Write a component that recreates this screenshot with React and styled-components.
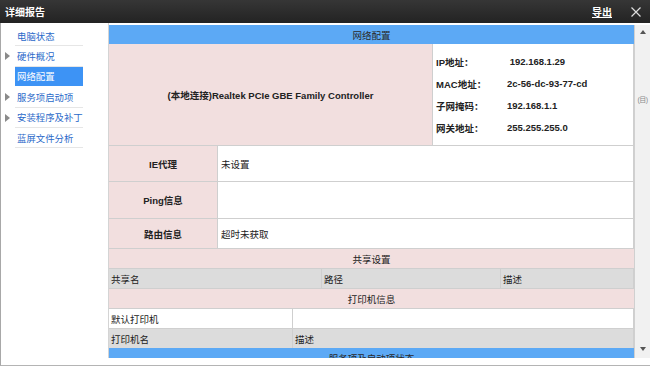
import React from 'react';
import styled, { createGlobalStyle } from 'styled-components';

const Global = createGlobalStyle`
  html, body { margin: 0; padding: 0; background: #fff; }
  body {
    font-family: "Liberation Sans", "Noto Sans CJK SC", "Noto Sans", sans-serif;
    font-size: 9.5px; color: #222;
  }
  * { box-sizing: border-box; }
`;

const Window = styled.div`
  width: 650px; height: 367px; overflow: hidden; background: #fff;
  display: flex; flex-direction: column;
`;
const TitleBar = styled.div`
  height: 23px; flex: none; display: flex; align-items: center;
  padding-left: 5px; color: #fff;
  background: linear-gradient(#363636, #232323);
`;
const Title = styled.div` flex: 1; font-weight: bold; font-size: 10px; `;
const ExportLink = styled.span`
  font-size: 10px; font-weight: bold; text-decoration: underline; margin-right: 19px;
`;
const CloseIcon = styled.svg` width: 10px; height: 10px; margin-right: 9px; `;

const Body = styled.div`
  height: 343px; display: flex; border-left: 1px solid #a8a8a8;
  border-bottom: 1px solid #b4b4b4;
`;
const Sidebar = styled.ul`
  list-style: none; margin: 0; padding: 3px 0 0 0; width: 107px; flex: none;
`;
const NavItem = styled.li`
  position: relative; margin-left: 14px; width: 68px; height: 20.4px;
  display: flex; align-items: center; padding-left: 2px; white-space: nowrap;
  border-bottom: 1px solid ${p => (p.$active ? '#fff' : '#e6e6e6')};
  color: ${p => (p.$active ? '#fff' : '#2a69c9')};
  background: ${p => (p.$active ? '#3d93f5' : 'transparent')};
  font-size: 9.4px;
  &::before {
    content: ''; display: ${p => (p.$arrow ? 'block' : 'none')};
    position: absolute; left: -10px; top: 6px;
    border-left: 5px solid #8a8a8a; border-top: 4px solid transparent; border-bottom: 4px solid transparent;
  }
`;

const Main = styled.div`
  flex: 1; display: flex; padding-top: 2px; border-left: 1px solid #d4d4d4;
  height: 335px;
`;
const ScrollArea = styled.div` width: 525px; height: 333px; overflow: hidden; `;
const Scrollbar = styled.div`
  flex: 1; height: 333px; background: #f1f1f1; border-left: 1px solid #d0d0d0;
  display: flex; flex-direction: column; align-items: center;
  padding: 3px 0;
`;
const ArrowUp = styled.div`
  border-bottom: 4px solid #555; border-left: 3px solid transparent; border-right: 3px solid transparent;
  margin-top: 2px;
`;
const ArrowDown = styled.div`
  border-top: 4px solid #555; border-left: 3px solid transparent; border-right: 3px solid transparent;
  margin-top: auto; margin-bottom: 4px;
`;
const Thumb = styled.div`
  width: 13px; height: 40px; margin-top: 45px;
  display: flex; align-items: center; justify-content: center;
  color: #8a8a8a; font-size: 7px; letter-spacing: -0.5px;
`;

const SectionHeader = styled.div`
  height: 19px; background: #5ca9f5; display: flex; align-items: center; justify-content: center;
  color: #2a2a2a;
`;
const NetRow = styled.div`
  display: grid; grid-template-columns: 323px 1fr; height: 101px;
`;
const PinkCell = styled.div`
  background: #f2dfdf; display: flex; align-items: center; justify-content: center;
  font-weight: bold; color: #222;
`;
const InfoCell = styled.div`
  background: #fff; border-left: 1px solid #cfcfcf; border-right: 1px solid #cfcfcf;
  display: flex; flex-direction: column; justify-content: center; padding-left: 3px;
`;
const InfoLine = styled.div`
  display: grid; grid-template-columns: 71px 1fr; height: 22px; align-items: center;
  font-weight: bold; white-space: pre;
`;
const KVRow = styled.div`
  display: grid; grid-template-columns: 108px 1fr; height: ${p => p.$h}px;
  border-top: 1px solid #cfcfcf;
`;
const ValueCell = styled.div`
  background: #fff; border-left: 1px solid #cfcfcf; border-right: 1px solid #cfcfcf;
  display: flex; align-items: center; padding-left: 3px;
`;
const SubHeader = styled.div`
  height: 20px; background: #f2dfdf; border-top: 1px solid #cfcfcf;
  display: flex; align-items: center; justify-content: center;
`;
const GridRow = styled.div`
  display: grid; grid-template-columns: ${p => p.$cols}; height: 20px;
  background: ${p => (p.$white ? '#fff' : '#dcdcdc')};
  border-top: 1px solid #cfcfcf; border-right: 1px solid #cfcfcf;
`;
const GridCell = styled.div`
  display: flex; align-items: center; padding-left: 2px;
  & + & { border-left: 1px solid #cfcfcf; }
`;

const nav = [
  { t: '电脑状态' },
  { t: '硬件概况', arrow: true },
  { t: '网络配置', active: true },
  { t: '服务项启动项', arrow: true },
  { t: '安装程序及补丁', arrow: true },
  { t: '蓝屏文件分析' },
];

const info = [
  ['IP地址：', ' 192.168.1.29'],
  ['MAC地址：', '2c-56-dc-93-77-cd'],
  ['子网掩码：', '192.168.1.1'],
  ['网关地址：', '255.255.255.0'],
];

export default function App() {
  return (
    <>
      <Global />
      <Window>
        <TitleBar>
          <Title>详细报告</Title>
          <ExportLink>导出</ExportLink>
          <CloseIcon viewBox="0 0 10 10">
            <path d="M0.5 0.5 L9.5 9.5 M9.5 0.5 L0.5 9.5" stroke="#ddd" strokeWidth="1.2" />
          </CloseIcon>
        </TitleBar>
        <Body>
          <Sidebar>
            {nav.map(n => (
              <NavItem key={n.t} $active={n.active} $arrow={n.arrow}>{n.t}</NavItem>
            ))}
          </Sidebar>
          <Main>
            <ScrollArea>
              <SectionHeader>网络配置</SectionHeader>
              <NetRow>
                <PinkCell>(本地连接)Realtek PCIe GBE Family Controller</PinkCell>
                <InfoCell>
                  {info.map(([k, v]) => (
                    <InfoLine key={k}><span>{k}</span><span>{v}</span></InfoLine>
                  ))}
                </InfoCell>
              </NetRow>
              <KVRow $h={36}><PinkCell>IE代理</PinkCell><ValueCell>未设置</ValueCell></KVRow>
              <KVRow $h={37}><PinkCell>Ping信息</PinkCell><ValueCell /></KVRow>
              <KVRow $h={30}><PinkCell>路由信息</PinkCell><ValueCell>超时未获取</ValueCell></KVRow>
              <SubHeader>共享设置</SubHeader>
              <GridRow $cols="212px 179px 1fr">
                <GridCell>共享名</GridCell><GridCell>路径</GridCell><GridCell>描述</GridCell>
              </GridRow>
              <SubHeader>打印机信息</SubHeader>
              <GridRow $cols="183px 1fr" $white>
                <GridCell>默认打印机</GridCell><GridCell />
              </GridRow>
              <GridRow $cols="183px 1fr">
                <GridCell>打印机名</GridCell><GridCell>描述</GridCell>
              </GridRow>
              <SectionHeader>服务项及启动项状态</SectionHeader>
            </ScrollArea>
            <Scrollbar>
              <ArrowUp />
              <Thumb>(目)</Thumb>
              <ArrowDown />
            </Scrollbar>
          </Main>
        </Body>
      </Window>
    </>
  );
}
